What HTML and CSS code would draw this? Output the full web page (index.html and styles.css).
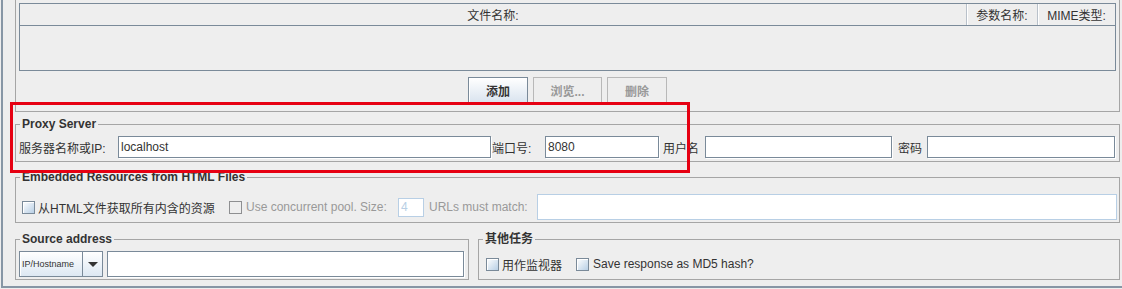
FILE: index.html
```html
<!DOCTYPE html>
<html lang="zh-CN">
<head>
    <meta charset="UTF-8">
    <title>HTTP Request - Advanced</title>
    <link rel="stylesheet" href="styles.css">
</head>
<body>
    <div class="frame">
        <!-- Files upload -->
        <div class="files-panel">
            <div class="file-table">
                <div class="file-head">
                    <div class="col-name">文件名称:</div>
                    <div class="col-param">参数名称:</div>
                    <div class="col-mime">MIME类型:</div>
                </div>
            </div>
            <div class="file-buttons">
                <button class="btn btn-add">添加</button>
                <button class="btn btn-off btn-browse" disabled>浏览...</button>
                <button class="btn btn-off btn-delete" disabled>删除</button>
            </div>
        </div>

        <!-- Proxy -->
        <fieldset class="group proxy">
            <legend>Proxy Server</legend>
            <div class="proxy-row">
                <label class="lbl lbl-server">服务器名称或IP:</label>
                <input class="field in-server" type="text" value="localhost">
                <label class="lbl lbl-port">端口号:</label>
                <input class="field in-port" type="text" value="8080">
                <label class="lbl lbl-user">用户名</label>
                <input class="field in-user" type="text">
                <label class="lbl lbl-pass">密码</label>
                <input class="field in-pass" type="password">
            </div>
        </fieldset>

        <!-- Embedded resources -->
        <fieldset class="group embedded">
            <legend>Embedded Resources from HTML Files</legend>
            <div class="embedded-row">
                <div class="check-item item-fetch">
                    <span class="check"></span>
                    <span class="check-text">从HTML文件获取所有内含的资源</span>
                </div>
                <div class="check-item item-pool">
                    <span class="check check-off"></span>
                    <span class="check-text text-off">Use concurrent pool. Size:</span>
                </div>
                <div class="field field-off size-field">4</div>
                <span class="lbl lbl-urls text-off">URLs must match:</span>
                <div class="field field-off url-field"></div>
            </div>
        </fieldset>

        <div class="bottom-row">
            <!-- Source address -->
            <fieldset class="group source">
                <legend>Source address</legend>
                <div class="source-row">
                    <div class="combo">
                        <span class="combo-value">IP/Hostname</span>
                        <span class="combo-arrow"></span>
                    </div>
                    <input class="field in-source" type="text">
                </div>
            </fieldset>

            <!-- Other tasks -->
            <fieldset class="group tasks">
                <legend>其他任务</legend>
                <div class="tasks-row">
                    <div class="check-item">
                        <span class="check"></span>
                        <span class="check-text">用作监视器</span>
                    </div>
                    <div class="check-item item-md5">
                        <span class="check"></span>
                        <span class="check-text">Save response as MD5 hash?</span>
                    </div>
                </div>
            </fieldset>
        </div>
    </div>

    <!-- annotation box drawn over the proxy section -->
    <div class="mark"></div>
</body>
</html>
```

FILE: styles.css
```css
* {
    margin: 0;
    padding: 0;
    box-sizing: border-box;
}

body {
    position: relative;
    width: 1122px;
    height: 289px;
    overflow: hidden;
    background-color: #eeeeee;
    font-family: "Liberation Sans", "Noto Sans CJK SC", sans-serif;
    font-size: 12px;
    color: #333333;
}

.frame {
    height: 288px;
    margin-left: 1px;
    border-left: 2px solid #8796a5;
    border-bottom: 2px solid #8796a5;
    padding: 0 2px 0 12px;
}

/* Files panel */
.files-panel {
    height: 112px;
    border: 1px solid #a5a5a5;
    border-top: none;
    padding: 3px 3px 8px;
}

.file-table {
    height: 68px;
    border: 1px solid #7a8a99;
}

.file-head {
    display: flex;
    height: 22px;
    border-bottom: 1px solid #7a8a99;
}

.file-head div {
    display: flex;
    align-items: center;
    justify-content: center;
}

.col-name {
    flex: 1;
}

.col-param {
    width: 71px;
    border-left: 1px solid #b9c1ca;
    box-shadow: inset 1px 0 0 #ffffff;
}

.col-mime {
    width: 78px;
    border-left: 1px solid #b9c1ca;
    box-shadow: inset 1px 0 0 #ffffff;
}

.file-buttons {
    display: flex;
    justify-content: center;
    gap: 5px;
    margin-top: 6px;
}

.btn {
    height: 26px;
    width: 60px;
    font: inherit;
    font-weight: bold;
    color: #333333;
    border: 1px solid #7a8a99;
    background: linear-gradient(#ffffff, #dae4ef);
    box-shadow: inset 1px 1px 0 #ffffff;
}

.btn-browse {
    width: 69px;
}

.btn-off {
    color: #999999;
    border-color: #b8b8b8;
    background: #eeeeee;
    box-shadow: none;
}

/* Titled groups */
.group {
    border: 1px solid #a5a5a5;
    min-width: 0;
}

.group legend {
    margin-left: 4px;
    padding: 0 2px;
    font-weight: bold;
    line-height: 14px;
    color: #333333;
}

.proxy {
    margin-top: 5px;
}

.proxy-row {
    display: flex;
    align-items: center;
    padding: 5px 4px 3px 3px;
}

.lbl {
    flex: none;
    white-space: nowrap;
}

.lbl-server { width: 99px; }
.lbl-port { width: 54px; padding-left: 1px; }
.lbl-user { width: 46px; padding-left: 4px; }
.lbl-pass { width: 35px; padding-left: 6px; }

.field {
    flex: none;
    height: 22px;
    border: 1px solid #7a8a99;
    background-color: #ffffff;
    font: inherit;
    color: #333333;
    padding: 0 2px;
    outline: none;
    box-shadow: 1px 1px 0 #ffffff;
}

.in-server { width: 373px; }
.in-port { width: 114px; }
.in-user { width: 187px; }
.in-pass { width: 188px; }

.field-off {
    border-color: #b8cfe5;
    color: #b8cfe5;
    box-shadow: none;
}

/* Embedded resources */
.embedded {
    margin-top: 8px;
}

.embedded-row {
    display: flex;
    align-items: center;
    padding: 10px 2px 2px 3px;
}

.check-item {
    display: flex;
    align-items: center;
    flex: none;
    white-space: nowrap;
}

.item-fetch {
    width: 210px;
    padding-left: 3px;
}

.item-pool {
    width: 169px;
}

.check {
    flex: none;
    width: 13px;
    height: 13px;
    border: 1px solid #7a8a99;
    background: linear-gradient(135deg, #ffffff, #b8cfe5);
    box-shadow: inset 1px 1px 0 #ffffff;
}

.check-off {
    border-color: #8e8f91;
    background: #eeeeee;
    box-shadow: none;
}

.check-text {
    margin-left: 3px;
}

.item-pool .check-text,
.item-md5 .check-text {
    margin-left: 4px;
}

.text-off {
    color: #999999;
}

.size-field {
    width: 26px;
    height: 19px;
    line-height: 17px;
}

.lbl-urls {
    width: 113px;
    padding-left: 5px;
}

.url-field {
    flex: 1;
    height: 26px;
}

/* Bottom row */
.bottom-row {
    display: flex;
    gap: 9px;
    margin-top: 9px;
}

.source {
    width: 454px;
    flex: none;
}

.tasks {
    flex: 1;
}

.source-row {
    display: flex;
    gap: 4px;
    padding: 5px 4px 2px 3px;
}

.combo {
    display: flex;
    flex: none;
    width: 84px;
    height: 26px;
    border: 1px solid #7a8a99;
    background: linear-gradient(#ffffff, #dde8f3);
    box-shadow: inset 1px 1px 0 #ffffff;
}

.combo-value {
    flex: 1;
    display: flex;
    align-items: center;
    padding-left: 2px;
    font-size: 9px;
    border-right: 1px solid #7a8a99;
}

.combo-arrow {
    width: 19px;
    display: flex;
    align-items: center;
    justify-content: center;
}

.combo-arrow::after {
    content: "";
    border-left: 5px solid transparent;
    border-right: 5px solid transparent;
    border-top: 5px solid #333333;
}

.in-source {
    flex: 1;
    height: 26px;
}

.tasks-row {
    display: flex;
    align-items: center;
    height: 33px;
    padding: 5px 0 2px 7px;
}

.item-md5 {
    margin-left: 14px;
}

/* Annotation */
.mark {
    position: absolute;
    left: 10px;
    top: 102px;
    width: 680px;
    height: 71px;
    border: 3px solid #e60012;
}
```
